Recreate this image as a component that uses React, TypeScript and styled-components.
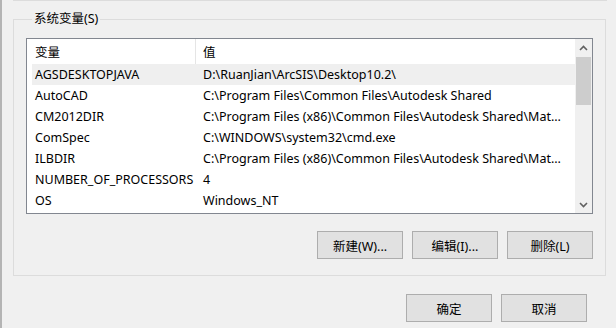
import React from "react";
import styled, { createGlobalStyle } from "styled-components";

const GlobalStyle = createGlobalStyle`
  html, body {
    margin: 0;
    padding: 0;
    background: #f0f0f0;
  }
  body {
    font-family: "Noto Sans", "Noto Sans CJK SC", sans-serif;
    font-size: 12.5px;
    color: #000;
  }
`;

const Window = styled.div`
  width: 616px;
  height: 328px;
  box-sizing: border-box;
  border-left: 2px solid #b4b4b4;
  background: #f0f0f0;
  overflow: hidden;
  display: flex;
  flex-direction: column;
`;

const PrevGroupEdge = styled.div`
  margin: 0 9px 0 11px;
  height: 1px;
  background: #dcdcdc;
`;

const Group = styled.fieldset`
  margin: 11px 10px 0 11px;
  padding: 12px 12px 16px 12px;
  border: 1px solid #dcdcdc;
  height: 264px;
  box-sizing: border-box;
  display: flex;
  flex-direction: column;
`;

const Legend = styled.legend`
  padding: 0 2px;
  margin-left: 6px;
  line-height: 14px;
  color: #000;
`;

const List = styled.div`
  height: 176px;
  flex-shrink: 0;
  box-sizing: border-box;
  border: 1px solid #828790;
  background: #fff;
  display: flex;
`;

const Table = styled.div`
  flex: 1;
  display: flex;
  flex-direction: column;
  padding-left: 5px;
  min-width: 0;
`;

const Row = styled.div<{ $header?: boolean; $selected?: boolean }>`
  display: grid;
  grid-template-columns: 163px 1fr;
  height: ${(p) => (p.$header ? 25 : 21)}px;
  line-height: ${(p) => (p.$header ? 27 : 21)}px;
  background: ${(p) => (p.$selected ? "#efefef" : "transparent")};
`;

const Cell = styled.div<{ $value?: boolean; $divider?: boolean }>`
  padding-left: ${(p) => (p.$value ? 7 : 2)}px;
  padding-right: ${(p) => (p.$value ? 8 : 0)}px;
  border-left: ${(p) => (p.$divider ? "1px solid #e5e5e5" : "1px solid transparent")};
  white-space: nowrap;
  overflow: hidden;
  text-overflow: ${(p) => (p.$value ? "ellipsis" : "clip")};
  min-width: 0;
`;

const ScrollBar = styled.div`
  width: 17px;
  background: #f0f0f0;
  display: flex;
  flex-direction: column;
`;

const ArrowBox = styled.div`
  height: 17px;
  display: flex;
  align-items: center;
  justify-content: center;
`;

const Thumb = styled.div`
  height: 48px;
  margin: 1px 1px 0;
  background: #cdcdcd;
`;

const Track = styled.div`
  flex: 1;
`;

const ButtonRow = styled.div<{ $gap: number; $top: number }>`
  display: flex;
  justify-content: flex-end;
  gap: ${(p) => p.$gap}px;
  margin-top: ${(p) => p.$top}px;
`;

const Button = styled.button`
  width: 86px;
  height: 28px;
  box-sizing: border-box;
  border: 1px solid #adadad;
  background: #e1e1e1;
  font-family: "Noto Sans", "Noto Sans CJK SC", sans-serif;
  font-size: 12.5px;
  color: #000;
  padding: 0;
`;

const Footer = styled.div`
  margin-right: 29px;
`;

const rows: [string, string][] = [
  ["AGSDESKTOPJAVA", "D:\\RuanJian\\ArcSIS\\Desktop10.2\\"],
  ["AutoCAD", "C:\\Program Files\\Common Files\\Autodesk Shared"],
  ["CM2012DIR", "C:\\Program Files (x86)\\Common Files\\Autodesk Shared\\Materials\\2012"],
  ["ComSpec", "C:\\WINDOWS\\system32\\cmd.exe"],
  ["ILBDIR", "C:\\Program Files (x86)\\Common Files\\Autodesk Shared\\Materials\\Library"],
  ["NUMBER_OF_PROCESSORS", "4"],
  ["OS", "Windows_NT"],
];

const Chevron = ({ down }: { down?: boolean }) => (
  <svg width="9" height="6" viewBox="0 0 9 6">
    <path
      d={down ? "M1 1 L4.5 4.5 L8 1" : "M1 5 L4.5 1.5 L8 5"}
      fill="none"
      stroke="#606060"
      strokeWidth="1.6"
    />
  </svg>
);

export default function App() {
  return (
    <>
      <GlobalStyle />
      <Window>
        <PrevGroupEdge />
        <Group>
          <Legend>系统变量(S)</Legend>
          <List>
            <Table>
              <Row $header>
                <Cell>变量</Cell>
                <Cell $value $divider>值</Cell>
              </Row>
              {rows.map(([name, value], i) => (
                <Row key={name} $selected={i === 0}>
                  <Cell>{name}</Cell>
                  <Cell $value>{value}</Cell>
                </Row>
              ))}
            </Table>
            <ScrollBar>
              <ArrowBox>
                <Chevron />
              </ArrowBox>
              <Thumb />
              <Track />
              <ArrowBox>
                <Chevron down />
              </ArrowBox>
            </ScrollBar>
          </List>
          <ButtonRow $gap={9} $top={17}>
            <Button>新建(W)...</Button>
            <Button>编辑(I)...</Button>
            <Button>删除(L)</Button>
          </ButtonRow>
        </Group>
        <Footer>
          <ButtonRow $gap={9} $top={18}>
            <Button>确定</Button>
            <Button>取消</Button>
          </ButtonRow>
        </Footer>
      </Window>
    </>
  );
}
